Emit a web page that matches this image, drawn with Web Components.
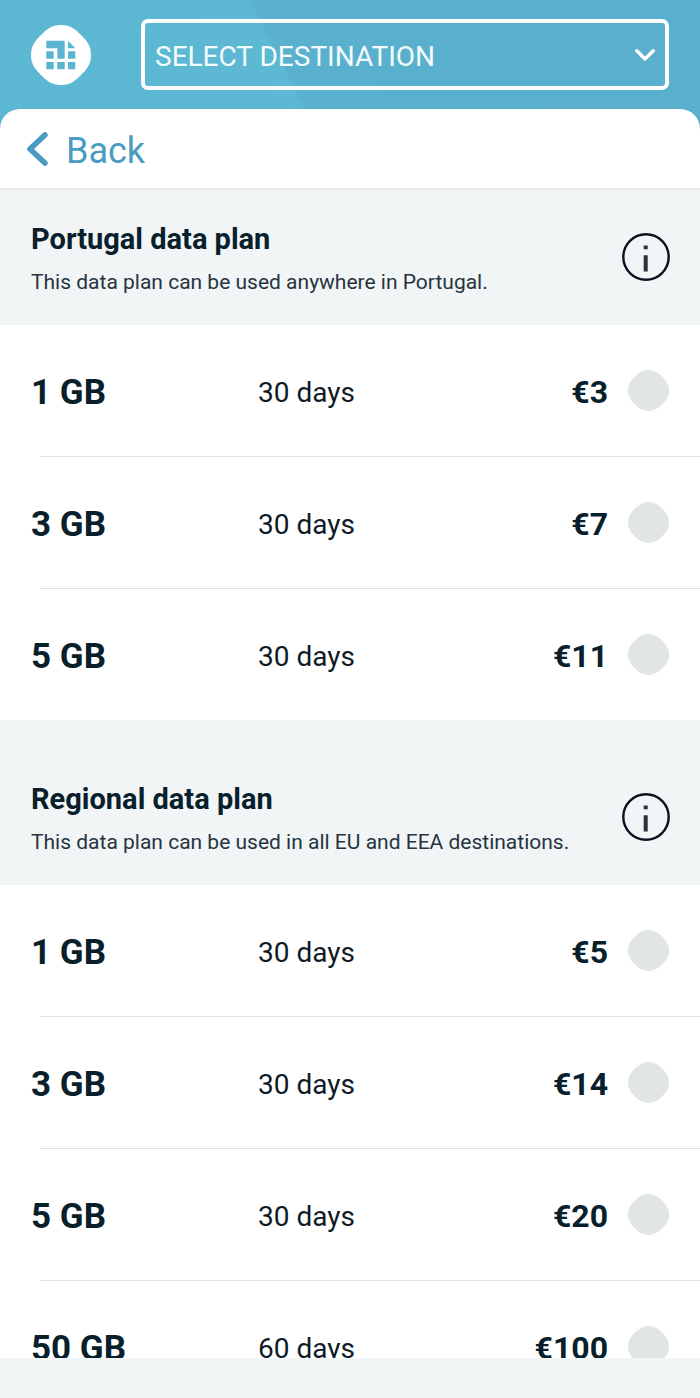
<!DOCTYPE html>
<html lang="en">
<head>
<meta charset="utf-8">
<meta name="viewport" content="width=device-width, initial-scale=1">
<title>Data plans</title>
<style>
  html, body { margin: 0; height: 100%; }
  body {
    font-family: Roboto, "Liberation Sans", sans-serif;
    color: #08202c;
    --brand: #4a9bc2;
    --surface: #f1f5f6;
    --line: #dde1e3;
    --muted: #e1e5e6;
  }
</style>
</head>
<body>
<app-shell>
  <destination-bar slot="header"></destination-bar>
  <back-bar>Back</back-bar>
  <data-plan heading="Portugal data plan" note="This data plan can be used anywhere in Portugal.">
    <plan-option size="1 GB" duration="30 days" price="€3"></plan-option>
    <plan-option size="3 GB" duration="30 days" price="€7"></plan-option>
    <plan-option size="5 GB" duration="30 days" price="€11"></plan-option>
  </data-plan>
  <data-plan spaced heading="Regional data plan" note="This data plan can be used in all EU and EEA destinations.">
    <plan-option size="1 GB" duration="30 days" price="€5"></plan-option>
    <plan-option size="3 GB" duration="30 days" price="€14"></plan-option>
    <plan-option size="5 GB" duration="30 days" price="€20"></plan-option>
    <plan-option size="50 GB" duration="60 days" price="€100"></plan-option>
  </data-plan>
</app-shell>

<script>
class BaseElement extends HTMLElement {
  render(html) {
    const template = document.createElement('template');
    template.innerHTML = html;
    this.attachShadow({ mode: 'open' }).append(template.content.cloneNode(true));
  }
}

customElements.define('app-shell', class extends BaseElement {
  connectedCallback() {
    this.render(`
      <style>
        :host {
          display: flex; flex-direction: column; height: 100vh; overflow: hidden;
          background: linear-gradient(63deg, #5bb7d2 0, #5cb8d3 281px, #59b1ce 282px, #59afcd 100%) 0 0 / 100% 130px no-repeat #fff;
        }
        main {
          flex: 1; min-height: 0; overflow: hidden;
          border-radius: 20px 20px 0 0; background: #fff;
        }
        footer { height: 40px; background: var(--surface); }
      </style>
      <slot name="header"></slot>
      <main><slot></slot></main>
      <footer></footer>`);
  }
});

customElements.define('destination-bar', class extends BaseElement {
  connectedCallback() {
    this.render(`
      <style>
        :host { display: flex; align-items: center; gap: 50px; padding: 19px 31px; color: #fff; }
        .logo { flex: none; width: 60px; height: 60px; }
        .field { flex: 1; display: grid; align-items: center; }
        .field > * { grid-area: 1 / 1; }
        select {
          appearance: none; width: 100%; height: 71px; margin: 0; padding: 4px 48px 0 10px;
          border: 4px solid #fff; border-radius: 7px; background: transparent;
          color: #f4fbfd; font: 400 28px/36px Roboto, sans-serif;
        }
        option { color: #08202c; }
        .arrow { justify-self: end; margin-right: 14px; pointer-events: none; }
      </style>
      <svg class="logo" viewBox="0 0 60 60" aria-hidden="true">
        <path fill="#fff" d="M30 0C40 0 45 5 50 10C55 15 60 20 60 30C60 40 55 45 50 50C45 55 40 60 30 60C20 60 15 55 10 50C5 45 0 40 0 30C0 20 5 15 10 10C15 5 20 0 30 0Z"/>
        <path fill="#5ab5d1" d="M15.3 15.7H33.7V33.7H26.3V23.3H15.3ZM37 15.7L44.3 23.3H37ZM15.3 26.3H22.7V33.7H15.3ZM37 26.3H44.3V33.7H37ZM15.3 37H22.7V44.3H15.3ZM26.3 37H33.7V44.3H26.3ZM37 37H44.3V44.3H37Z"/>
      </svg>
      <div class="field">
        <select aria-label="Destination"><option>SELECT DESTINATION</option></select>
        <svg class="arrow" width="20" height="14" viewBox="0 0 20 14" fill="none" stroke="#fff" stroke-width="3.4" stroke-linecap="round" stroke-linejoin="round" aria-hidden="true"><path d="M1.8 2.8L10 11L18.2 2.8"/></svg>
      </div>`);
  }
});

customElements.define('back-bar', class extends BaseElement {
  connectedCallback() {
    this.render(`
      <style>
        :host { display: flex; height: 79px; border-bottom: 2px solid #e5e9ea; box-sizing: content-box; }
        button {
          display: flex; align-items: center; gap: 18px; margin: 0; padding: 4px 26px 0;
          border: 0; background: none; color: var(--brand);
          font: 400 36px/44px Roboto, sans-serif; cursor: pointer;
        }
        svg { margin-bottom: 4px; }
      </style>
      <button type="button">
        <svg width="22" height="34" viewBox="0 0 22 34" fill="none" stroke="currentColor" stroke-width="5.6" stroke-linecap="round" stroke-linejoin="round" aria-hidden="true"><path d="M18.9 3L4 17L18.9 31"/></svg>
        <span><slot></slot></span>
      </button>`);
  }
});

customElements.define('data-plan', class extends BaseElement {
  connectedCallback() {
    this.render(`
      <style>
        :host { display: block; }
        header {
          display: flex; align-items: center; justify-content: space-between;
          height: 134px; padding: 0 30px 1px 31px; background: var(--surface);
        }
        :host([spaced]) header { padding-top: 30px; }
        h2 { margin: 4px 0 0; font: 700 29px/36px Roboto, sans-serif; }
        p { margin: 10px 0 0; font: 400 21px/30px Roboto, sans-serif; color: #26343f; }
        button { flex: none; margin: 0; padding: 0; border: 0; background: none; color: #08131f; cursor: pointer; }
        svg { display: block; }
      </style>
      <section>
        <header>
          <div><h2></h2><p></p></div>
          <button type="button" aria-label="More information">
            <svg width="48" height="48" viewBox="0 0 48 48" aria-hidden="true">
              <circle cx="24" cy="24" r="22.7" fill="none" stroke="currentColor" stroke-width="2.4"/>
              <path fill="#26343b" d="M21.7 12.4H25.7V16.2H21.7ZM21.7 22.2H25.7V38.4H21.7Z"/>
            </svg>
          </button>
        </header>
        <slot></slot>
      </section>`);
    this.shadowRoot.querySelector('h2').textContent = this.getAttribute('heading');
    this.shadowRoot.querySelector('p').textContent = this.getAttribute('note');
  }
});

customElements.define('plan-option', class extends BaseElement {
  connectedCallback() {
    this.render(`
      <style>
        :host { display: block; }
        label {
          display: grid; grid-template-columns: 227px 1fr auto 41px; align-items: center;
          height: 131px; padding: 0 31px; cursor: pointer;
        }
        :host(:not(:last-child))::after {
          content: ""; display: block; height: 1px; margin-left: 40px; background: var(--line);
        }
        span { padding-top: 4px; }
        .size { font: 700 35px/44px Roboto, sans-serif; }
        .duration { font: 400 28px/36px Roboto, sans-serif; color: #101b26; }
        .price { margin-right: 20px; padding-top: 2px; font: 700 32px/40px Roboto, sans-serif; }
        input {
          appearance: none; width: 41px; height: 41px; margin: 0; background: var(--muted);
          clip-path: path("M20.5 0C27 0 31 3.5 34.3 6.7C37.5 10 41 14 41 20.5C41 27 37.5 31 34.3 34.3C31 37.5 27 41 20.5 41C14 41 10 37.5 6.7 34.3C3.5 31 0 27 0 20.5C0 14 3.5 10 6.7 6.7C10 3.5 14 0 20.5 0Z");
        }
        input:checked { background: var(--brand); }
      </style>
      <label>
        <span class="size"></span>
        <span class="duration"></span>
        <span class="price"></span>
        <input type="radio" name="plan">
      </label>`);
    for (const key of ['size', 'duration', 'price']) {
      this.shadowRoot.querySelector('.' + key).textContent = this.getAttribute(key);
    }
    // Radios in separate shadow roots do not share a group, so clear the others here.
    const input = this.shadowRoot.querySelector('input');
    input.addEventListener('change', () => {
      for (const other of document.querySelectorAll('plan-option')) {
        if (other !== this) other.shadowRoot.querySelector('input').checked = false;
      }
    });
  }
});
</script>
</body>
</html>
